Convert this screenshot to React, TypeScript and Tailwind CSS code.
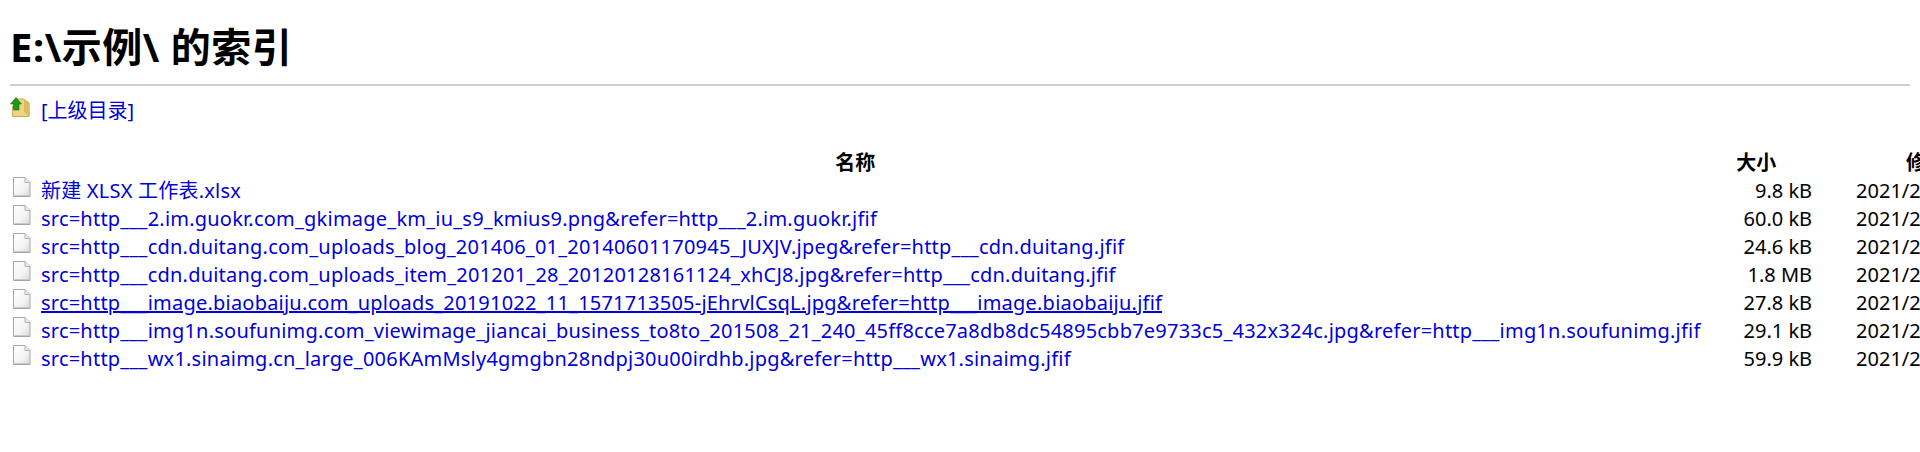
const files = [
  { name: "新建 XLSX 工作表.xlsx", size: "9.8 kB" },
  { name: "src=http___2.im.guokr.com_gkimage_km_iu_s9_kmius9.png&refer=http___2.im.guokr.jfif", size: "60.0 kB" },
  { name: "src=http___cdn.duitang.com_uploads_blog_201406_01_20140601170945_JUXJV.jpeg&refer=http___cdn.duitang.jfif", size: "24.6 kB" },
  { name: "src=http___cdn.duitang.com_uploads_item_201201_28_20120128161124_xhCJ8.jpg&refer=http___cdn.duitang.jfif", size: "1.8 MB" },
  { name: "src=http___image.biaobaiju.com_uploads_20191022_11_1571713505-jEhrvlCsqL.jpg&refer=http___image.biaobaiju.jfif", size: "27.8 kB", hover: true },
  { name: "src=http___img1n.soufunimg.com_viewimage_jiancai_business_to8to_201508_21_240_45ff8cce7a8db8dc54895cbb7e9733c5_432x324c.jpg&refer=http___img1n.soufunimg.jfif", size: "29.1 kB" },
  { name: "src=http___wx1.sinaimg.cn_large_006KAmMsly4gmgbn28ndpj30u00irdhb.jpg&refer=http___wx1.sinaimg.jfif", size: "59.9 kB" },
];

function FileIcon() {
  return (
    <svg className="mb-[8px] shrink-0" width="18" height="20" viewBox="0 0 18 20">
      <defs>
        <linearGradient id="page" x1="0" y1="0" x2="1" y2="1">
          <stop offset="0" stopColor="#ffffff" />
          <stop offset="0.6" stopColor="#f4f4f4" />
          <stop offset="1" stopColor="#d8d8d8" />
        </linearGradient>
      </defs>
      <path d="M0.5 0.5h11.5l5 5v14h-16.5z" fill="url(#page)" stroke="#a6a6a6" />
      <path d="M12 0.5v5h5" fill="#e8e8e8" stroke="#b0b0b0" />
      <path d="M1.5 18.5h15V7" fill="none" stroke="#c8c8c8" />
    </svg>
  );
}

function UpIcon() {
  return (
    <svg className="mb-[8px] shrink-0" width="20" height="20" viewBox="0 0 20 20">
      <path d="M2.5 9h3l1-7h7l5.5 4v13.5h-16.5z" fill="#efd67e" stroke="#c9aa55" />
      <path d="M14 2v13l5.5 4.5V6z" fill="#d9bb62" />
      <path d="M6 0.5 11.5 7H9v6H3.5V7H0.5z" fill="#1d9a1d" stroke="#0f6f0f" strokeWidth="0.6" />
    </svg>
  );
}

export default function App() {
  return (
    <div className="h-[452px] overflow-hidden bg-white p-[10px] font-['Noto_Sans','Noto_Sans_CJK_SC',sans-serif] text-[20px] leading-[28px] text-black">
      <h1 className="mt-[10px] mb-[10px] text-[40px] leading-[54px] font-bold tracking-[0.5px] whitespace-nowrap">E:\示例\ 的索引</h1>
      <hr className="mb-[11px] border-t-2 border-[#cfcfcf]" />
      <a className="flex h-[28px] items-center gap-[11px] text-[#0000d8]" href="#">
        <UpIcon />
        [上级目录]
      </a>
      <table className="mt-[24px] w-max border-collapse">
        <thead>
          <tr className="h-[28px] text-center font-bold">
            <th className="p-0">名称</th>
            <th className="p-0">大小</th>
            <th className="p-0">修改日期</th>
          </tr>
        </thead>
        <tbody>
          {files.map((f) => (
            <tr key={f.name} className="h-[28px] whitespace-nowrap">
              <td className="p-0">
                <a className={`flex items-center gap-[10px] pl-[3px] tracking-[0.22px] text-[#0000d8] ${f.hover ? "underline" : ""}`} href="#">
                  <FileIcon />
                  {f.name}
                </a>
              </td>
              <td className="pl-[43px] text-right">{f.size}</td>
              <td className="pr-[4px] pl-[44px] text-right">2021/2/24 上午10:30:15</td>
            </tr>
          ))}
        </tbody>
      </table>
    </div>
  );
}
